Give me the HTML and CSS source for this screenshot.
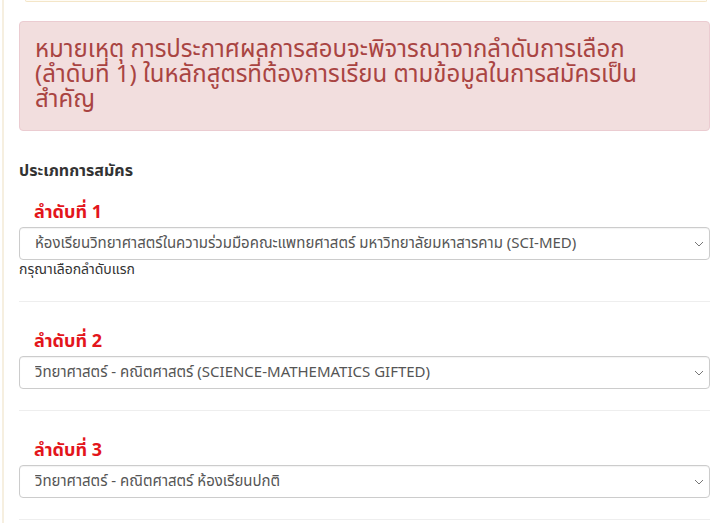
FILE: index.html
```html
<!DOCTYPE html>
<html lang="th">
<head>
    <meta charset="UTF-8">
    <meta name="viewport" content="width=device-width, initial-scale=1.0">
    <title>ประเภทการสมัคร</title>
    <link rel="stylesheet" href="styles.css">
</head>
<body>
    <div class="panel">
        <div class="top-box"></div>

        <div class="alert">
            หมายเหตุ การประกาศผลการสอบจะพิจารณาจากลำดับการเลือก <span class="nowrap">(ลำดับที่ 1)</span> ในหลักสูตรที่ต้องการเรียน ตามข้อมูลในการสมัครเป็นสำคัญ
        </div>

        <div class="group-title">ประเภทการสมัคร</div>

        <div class="choice first">
            <label class="choice-label" for="choice-1">ลำดับที่ 1</label>
            <div class="select-wrap">
                <select id="choice-1" class="form-select">
                    <option>ห้องเรียนวิทยาศาสตร์ในความร่วมมือคณะแพทยศาสตร์ มหาวิทยาลัยมหาสารคาม (SCI-MED)</option>
                </select>
                <svg class="chevron" width="10" height="6" viewBox="0 0 10 6"><path d="M1 1l4 4 4-4" fill="none" stroke="#777" stroke-width="1"/></svg>
            </div>
            <div class="help">กรุณาเลือกลำดับแรก</div>
        </div>
        <hr>

        <div class="choice">
            <label class="choice-label" for="choice-2">ลำดับที่ 2</label>
            <div class="select-wrap">
                <select id="choice-2" class="form-select">
                    <option>วิทยาศาสตร์ - คณิตศาสตร์ (SCIENCE-MATHEMATICS GIFTED)</option>
                </select>
                <svg class="chevron" width="10" height="6" viewBox="0 0 10 6"><path d="M1 1l4 4 4-4" fill="none" stroke="#777" stroke-width="1"/></svg>
            </div>
        </div>
        <hr>

        <div class="choice">
            <label class="choice-label" for="choice-3">ลำดับที่ 3</label>
            <div class="select-wrap">
                <select id="choice-3" class="form-select">
                    <option>วิทยาศาสตร์ - คณิตศาสตร์ ห้องเรียนปกติ</option>
                </select>
                <svg class="chevron" width="10" height="6" viewBox="0 0 10 6"><path d="M1 1l4 4 4-4" fill="none" stroke="#777" stroke-width="1"/></svg>
            </div>
        </div>
        <hr>
    </div>
</body>
</html>
```

FILE: styles.css
```css
body {
    margin: 0;
    background: #fff;
    font-family: "Noto Sans Thai", "Noto Sans", sans-serif;
    color: #333;
}
.panel {
    margin-left: 2px;
    border-left: 2px solid #f6efe0;
    padding: 0 10px 0 15px;
    height: 523px;
    overflow: hidden;
}
.top-box {
    height: 1px;
    margin: 0 3px 0 6px;
    border: 1px solid #f4e6c8;
    border-top: none;
    border-radius: 0 0 4px 4px;
    background: #fffcf5;
}
.alert {
    margin-top: 19px;
    padding: 16px 30px 17px 15px;
    background: #f2dede;
    border: 1px solid #ebccd1;
    border-radius: 4px;
    color: #a94442;
    font-size: 24px;
    line-height: 25px;
}
.nowrap {
    white-space: nowrap;
}
.group-title {
    margin-top: 30px;
    font-size: 16px;
    font-weight: 700;
    line-height: 20px;
}
.choice {
    padding-top: 28px;
}
.choice.first {
    padding-top: 20px;
}
.choice-label {
    display: block;
    padding-left: 15px;
    color: #e3151b;
    font-size: 18px;
    font-weight: 700;
    line-height: 24px;
    margin-bottom: 2px;
}
.select-wrap {
    position: relative;
}
.form-select {
    display: block;
    width: 100%;
    height: 33px;
    padding: 0 30px 0 15px;
    border: 1px solid #ccc;
    border-radius: 4px;
    background: #fff;
    color: #555;
    font-family: inherit;
    font-size: 15px;
    appearance: none;
    box-shadow: inset 0 1px 1px rgba(0, 0, 0, 0.05);
}
.chevron {
    position: absolute;
    right: 6px;
    top: 14px;
}
.help {
    margin-bottom: 2px;
    font-size: 14px;
    line-height: 20px;
}
hr {
    margin: 21px 0 0;
    border: 0;
    border-top: 1px solid #eee;
}
```
